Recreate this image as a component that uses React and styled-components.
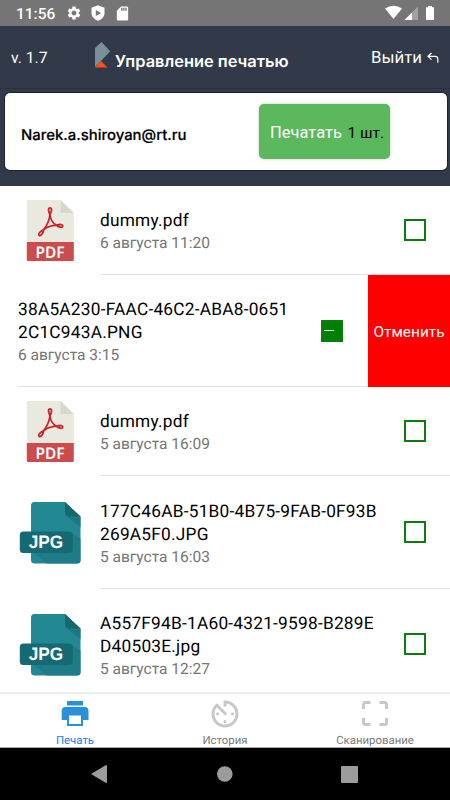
import React from 'react';
import styled, { createGlobalStyle } from 'styled-components';
import { MdSettings, MdSdCard, MdAvTimer } from 'react-icons/md';

const GlobalStyle = createGlobalStyle`
  * {
    box-sizing: border-box;
  }

  body {
    margin: 0;
    background: #000;
    font-family: Roboto, "Noto Sans", sans-serif;
    text-rendering: geometricPrecision;
  }

  svg {
    display: block;
    flex: none;
  }
`;

const Screen = styled.div`
  width: 450px;
  height: 800px;
  display: flex;
  flex-direction: column;
  overflow: hidden;
  background: #fff;
`;

const StatusBar = styled.div`
  flex: none;
  height: 26px;
  padding: 0 15px 0 16px;
  display: flex;
  align-items: center;
  background: #757575;
  color: #fff;

  .time {
    width: 50px;
    font-size: 15.5px;
    font-weight: 500;
    line-height: 26px;
    padding-top: 2px;
  }

  .shield {
    margin-left: 9px;
  }

  .card {
    margin-left: 8.5px;
  }

  .right {
    margin-left: auto;
    display: flex;
  }
`;

const Header = styled.header`
  flex: none;
  height: 160px;
  background: #323949;
  color: #fff;
`;

const TitleBar = styled.div`
  height: 63px;
  padding: 1px 11px 0;
  display: flex;
  align-items: center;
  border-bottom: 1px solid #312c40;

  .version {
    width: 84px;
    font-size: 15.7px;
  }

  .logo {
    margin-top: -6px;
  }

  h1 {
    margin: 7px 0 0 4px;
    font-family: Inter, Roboto, sans-serif;
    font-size: 16.4px;
    font-weight: 600;
    line-height: 20px;
    white-space: nowrap;
  }

  .exit {
    margin-left: auto;
    padding-top: 1px;
    display: flex;
    align-items: center;
    gap: 5px;
    font-size: 16.8px;
  }
`;

const UserCard = styled.div`
  width: 442px;
  height: 77px;
  margin: 4px 0 0 5px;
  padding: 0 57px 0 16px;
  display: flex;
  align-items: center;
  justify-content: space-between;
  border-radius: 5px;
  background: #fff;
  box-shadow: 0 0 0 1px #1c2138;

  .email {
    padding-top: 6px;
    color: #000;
    font-family: Inter, Roboto, sans-serif;
    font-size: 14.9px;
    font-weight: 500;
    -webkit-text-stroke: 0.2px #000;
  }
`;

const PrintButton = styled.button`
  width: 131px;
  height: 55px;
  margin-top: -1px;
  padding: 2px 0 0 11px;
  border: 0;
  border-radius: 5px;
  background: #5cb85c;
  box-shadow: 0 0 3px rgba(0, 0, 0, 0.25);
  color: #000;
  font-family: Roboto, sans-serif;
  font-size: 15.5px;
  text-align: left;
  white-space: nowrap;

  span {
    margin-right: 5.5px;
    color: #fff;
    font-size: 16.5px;
  }
`;

const FileList = styled.div`
  flex: 1;
  min-height: 0;
  overflow: hidden;
`;

const Row = styled.div`
  height: ${({ $height }) => $height}px;
  display: flex;
`;

const Thumb = styled.div`
  flex: none;
  width: 100px;
  padding-left: ${({ $type }) => ($type === 'pdf' ? 26 : 19)}px;
  display: flex;
  align-items: center;
`;

const RowBody = styled.div`
  flex: 1;
  min-width: 0;
  margin-left: ${({ $swiped }) => ($swiped ? 18 : 0)}px;
  display: flex;
  align-items: center;
  justify-content: space-between;
  padding-right: ${({ $swiped }) => ($swiped ? 25 : 24)}px;
  border-bottom: 1px solid #e1e1e1;
`;

const FileText = styled.div`
  padding-top: 3px;

  .name {
    margin: 1px 0 -1px;
    color: #000;
    font-size: 17.3px;
    line-height: 23px;
    letter-spacing: 0.23px;
    white-space: pre-line;
  }

  .date {
    color: #757575;
    font-size: 15.5px;
    line-height: 22px;
  }
`;

const Checkbox = styled.div`
  flex: none;
  width: 22px;
  height: 22px;
  display: flex;
  align-items: center;
  border: 2px solid #0a7d0a;
  background: ${({ $on }) => ($on ? '#008000' : '#fff')};

  &::before {
    content: '';
    width: 10px;
    height: ${({ $on }) => ($on ? 1.5 : 0)}px;
    margin-left: 1px;
    background: #fff;
  }
`;

const CancelAction = styled.button`
  flex: none;
  width: 82px;
  padding: 1px 0 0;
  border: 0;
  background: #f00;
  color: #fff;
  font-family: Roboto, sans-serif;
  font-size: 15.4px;
`;

const TabBar = styled.nav`
  flex: none;
  height: 56px;
  display: flex;
  border-top: 2px solid #eee;
  border-bottom: 1px solid #aaa;
  background: #fff;
`;

const Tab = styled.div`
  flex: 1;
  display: flex;
  flex-direction: column;
  align-items: center;
  color: ${({ $active }) => ($active ? '#157efb' : '#7b7b7b')};
  font-size: 11.4px;
  line-height: 14px;

  .icon {
    height: 39px;
    display: flex;
    align-items: center;
    color: ${({ $active }) => ($active ? '#2b90da' : '#c8c8c8')};
  }
`;

const SystemNav = styled.div`
  flex: none;
  height: 52px;
  padding: 0 92px 0 91px;
  display: flex;
  align-items: center;
  justify-content: space-between;
  background: #000;
`;

const files = [
  { type: 'pdf', name: 'dummy.pdf', date: '6 августа 11:20', height: 89 },
  { type: 'png', name: '38A5A230-FAAC-46C2-ABA8-0651\n2C1C943A.PNG', date: '6 августа 3:15', height: 112, swiped: true },
  { type: 'pdf', name: 'dummy.pdf', date: '5 августа 16:09', height: 89 },
  { type: 'jpg', name: '177C46AB-51B0-4B75-9FAB-0F93B\n269A5F0.JPG', date: '5 августа 16:03', height: 113 },
  { type: 'jpg', name: 'A557F94B-1A60-4321-9598-B289E\nD40503E.jpg', date: '5 августа 12:27', height: 111 },
];

function PdfIcon() {
  return (
    <svg width="48" height="62" viewBox="0 0 48 62">
      <path d="M1.5 0H34.5L47.8 13V42H0.8V1Q.8 0 1.5 0Z" fill="#e9e9e0" />
      <path d="M34.5 0L47.8 13H34.5Z" fill="#d7d7cb" />
      <path d="M0.8 42H47.8V60Q47.8 61 46.8 61H1.8Q.8 61 .8 60Z" fill="#cc4b4c" />
      <g fill="none" stroke="#cc2229" strokeWidth="1.8" strokeLinejoin="round">
        <path d="M24 7.9C22.2 7.9 21.9 10.5 24 14.5C26.2 10.5 25.8 7.9 24 7.9Z" />
        <path d="M24 14.5C24.3 19 27 23.4 30.5 25.2C34.5 23.9 37 24.6 36.8 26.2C36.5 28 33 27.4 30.5 25.2C25.5 25.5 21 27.1 17.8 29.6C16.8 34.5 14.3 36.5 13 35.3C11.8 33.9 14.2 31.2 17.8 29.6C20.8 25.6 23.6 19 24 14.5Z" />
      </g>
      <text x="24" y="57.5" textAnchor="middle" textLength="29" lengthAdjust="spacingAndGlyphs" fontFamily="Noto Sans, sans-serif" fontSize="16" fontWeight="600" fill="#fff">PDF</text>
    </svg>
  );
}

function JpgIcon() {
  return (
    <svg width="62" height="62" viewBox="0 0 62 62">
      <path d="M15 0H46L61.5 14.5V58Q61.5 61.5 58 61.5H15.5Q12 61.5 12 58V3.5Q12 0 15.5 0Z" fill="#218894" />
      <path d="M47 14L61.5 25V14.5Z" fill="#1c7882" />
      <path d="M53 31L61.5 36.5V58Q61.5 61.5 58 61.5H28L15 51H50Q54 51 54 47Z" fill="#1e7c88" />
      <path d="M46 0L61.5 14.5H50Q46 14.5 46 10.5Z" fill="#156872" />
      <rect x="0.8" y="29.5" width="53" height="21.5" rx="3.5" fill="#156973" />
      <text x="27" y="46" textAnchor="middle" textLength="34.5" lengthAdjust="spacingAndGlyphs" fontFamily="Liberation Sans, sans-serif" fontSize="18" fontWeight="700" fill="#fff">JPG</text>
    </svg>
  );
}

function FileRow({ file }) {
  return (
    <Row $height={file.height}>
      {!file.swiped && <Thumb $type={file.type}>{file.type === 'pdf' ? <PdfIcon /> : <JpgIcon />}</Thumb>}
      <RowBody $swiped={file.swiped}>
        <FileText>
          <div className="name">{file.name}</div>
          <div className="date">{file.date}</div>
        </FileText>
        <Checkbox $on={file.swiped} />
      </RowBody>
      {file.swiped && <CancelAction>Отменить</CancelAction>}
    </Row>
  );
}

function App() {
  return (
    <Screen>
      <GlobalStyle />
      <StatusBar>
        <div className="time">11:56</div>
        <MdSettings size={16} />
        <svg className="shield" width="14" height="16" viewBox="0 0 14 16">
          <path d="M7 .3L13.5 2.7V8C13.5 11.5 10.8 14.6 7 15.7C3.2 14.6.5 11.5.5 8V2.7Z" fill="#fff" />
          <path d="M4.8 4.9L10 7.9L4.8 10.9Z" fill="#757575" />
        </svg>
        <MdSdCard className="card" size={17} />
        <div className="right">
          <svg width="50" height="16" viewBox="0 0 50 16">
            <path d="M0 3.5Q8.5-2 17 3.5L8.5 14Z" fill="#fff" />
            <path d="M19.5 15L33 1.5V15Z" fill="#a2a2a2" />
            <path d="M19.5 15L27 7.5V15Z" fill="#fff" />
            <path d="M43 1H47V2.3H49V14.5Q49 15 48.5 15H41.5Q41 15 41 14.5V2.3H43Z" fill="#fff" />
          </svg>
        </div>
      </StatusBar>

      <Header>
        <TitleBar>
          <div className="version">v. 1.7</div>
          <svg className="logo" width="16" height="26" viewBox="0 0 16 26">
            <path d="M6.5 0L15.2 9.2L6 19L0 25V6Z" fill="#78909a" />
            <path d="M6 19L12.4 25.5H0Z" fill="#ff4f12" />
          </svg>
          <h1>Управление печатью</h1>
          <div className="exit">
            Выйти
            <svg width="12" height="12" viewBox="0 0 12 12" fill="none" stroke="#fff" strokeWidth="1.2">
              <path d="M4.5 1L1 4.3L4.5 7.6M1 4.3H8.2Q10.8 4.3 10.8 7V10.8" />
            </svg>
          </div>
        </TitleBar>
        <UserCard>
          <div className="email">Narek.a.shiroyan@rt.ru</div>
          <PrintButton>
            <span>Печатать</span>1 шт.
          </PrintButton>
        </UserCard>
      </Header>

      <FileList>
        {files.map((file, i) => (
          <FileRow key={i} file={file} />
        ))}
      </FileList>

      <TabBar>
        <Tab $active>
          <div className="icon">
            <svg width="28" height="27" viewBox="0 0 28 27" fill="currentColor">
              <path d="M6 1H22V5.5H6Z" />
              <path d="M4.5 7H23.5Q27.5 7 27.5 11V20H22V26H6V20H.7V11Q.7 7 4.5 7ZM8 15.5V24H20V15.5Z" fillRule="evenodd" />
            </svg>
          </div>
          Печать
        </Tab>
        <Tab>
          <div className="icon">
            <MdAvTimer size={36} />
          </div>
          История
        </Tab>
        <Tab>
          <div className="icon">
            <svg width="28" height="27" viewBox="0 0 28 27" fill="none" stroke="currentColor" strokeWidth="3">
              <path d="M2.5 9V4.5Q2.5 2.5 4.5 2.5H9.5M18.5 2.5H23.5Q25.5 2.5 25.5 4.5V9M25.5 18V22.5Q25.5 24.5 23.5 24.5H18.5M9.5 24.5H4.5Q2.5 24.5 2.5 22.5V18" />
            </svg>
          </div>
          Сканирование
        </Tab>
      </TabBar>

      <SystemNav>
        <svg width="16" height="18" viewBox="0 0 16 18">
          <path d="M0 9L15 0Q16 0 16 1V17Q16 18 15 18Z" fill="#9c9c9c" />
        </svg>
        <svg width="18" height="16" viewBox="0 0 18 16">
          <circle cx="9.8" cy="8" r="7.8" fill="#9c9c9c" />
        </svg>
        <svg width="17" height="17" viewBox="0 0 17 17">
          <rect width="17" height="17" rx="1" fill="#9c9c9c" />
        </svg>
      </SystemNav>
    </Screen>
  );
}

export default App;
